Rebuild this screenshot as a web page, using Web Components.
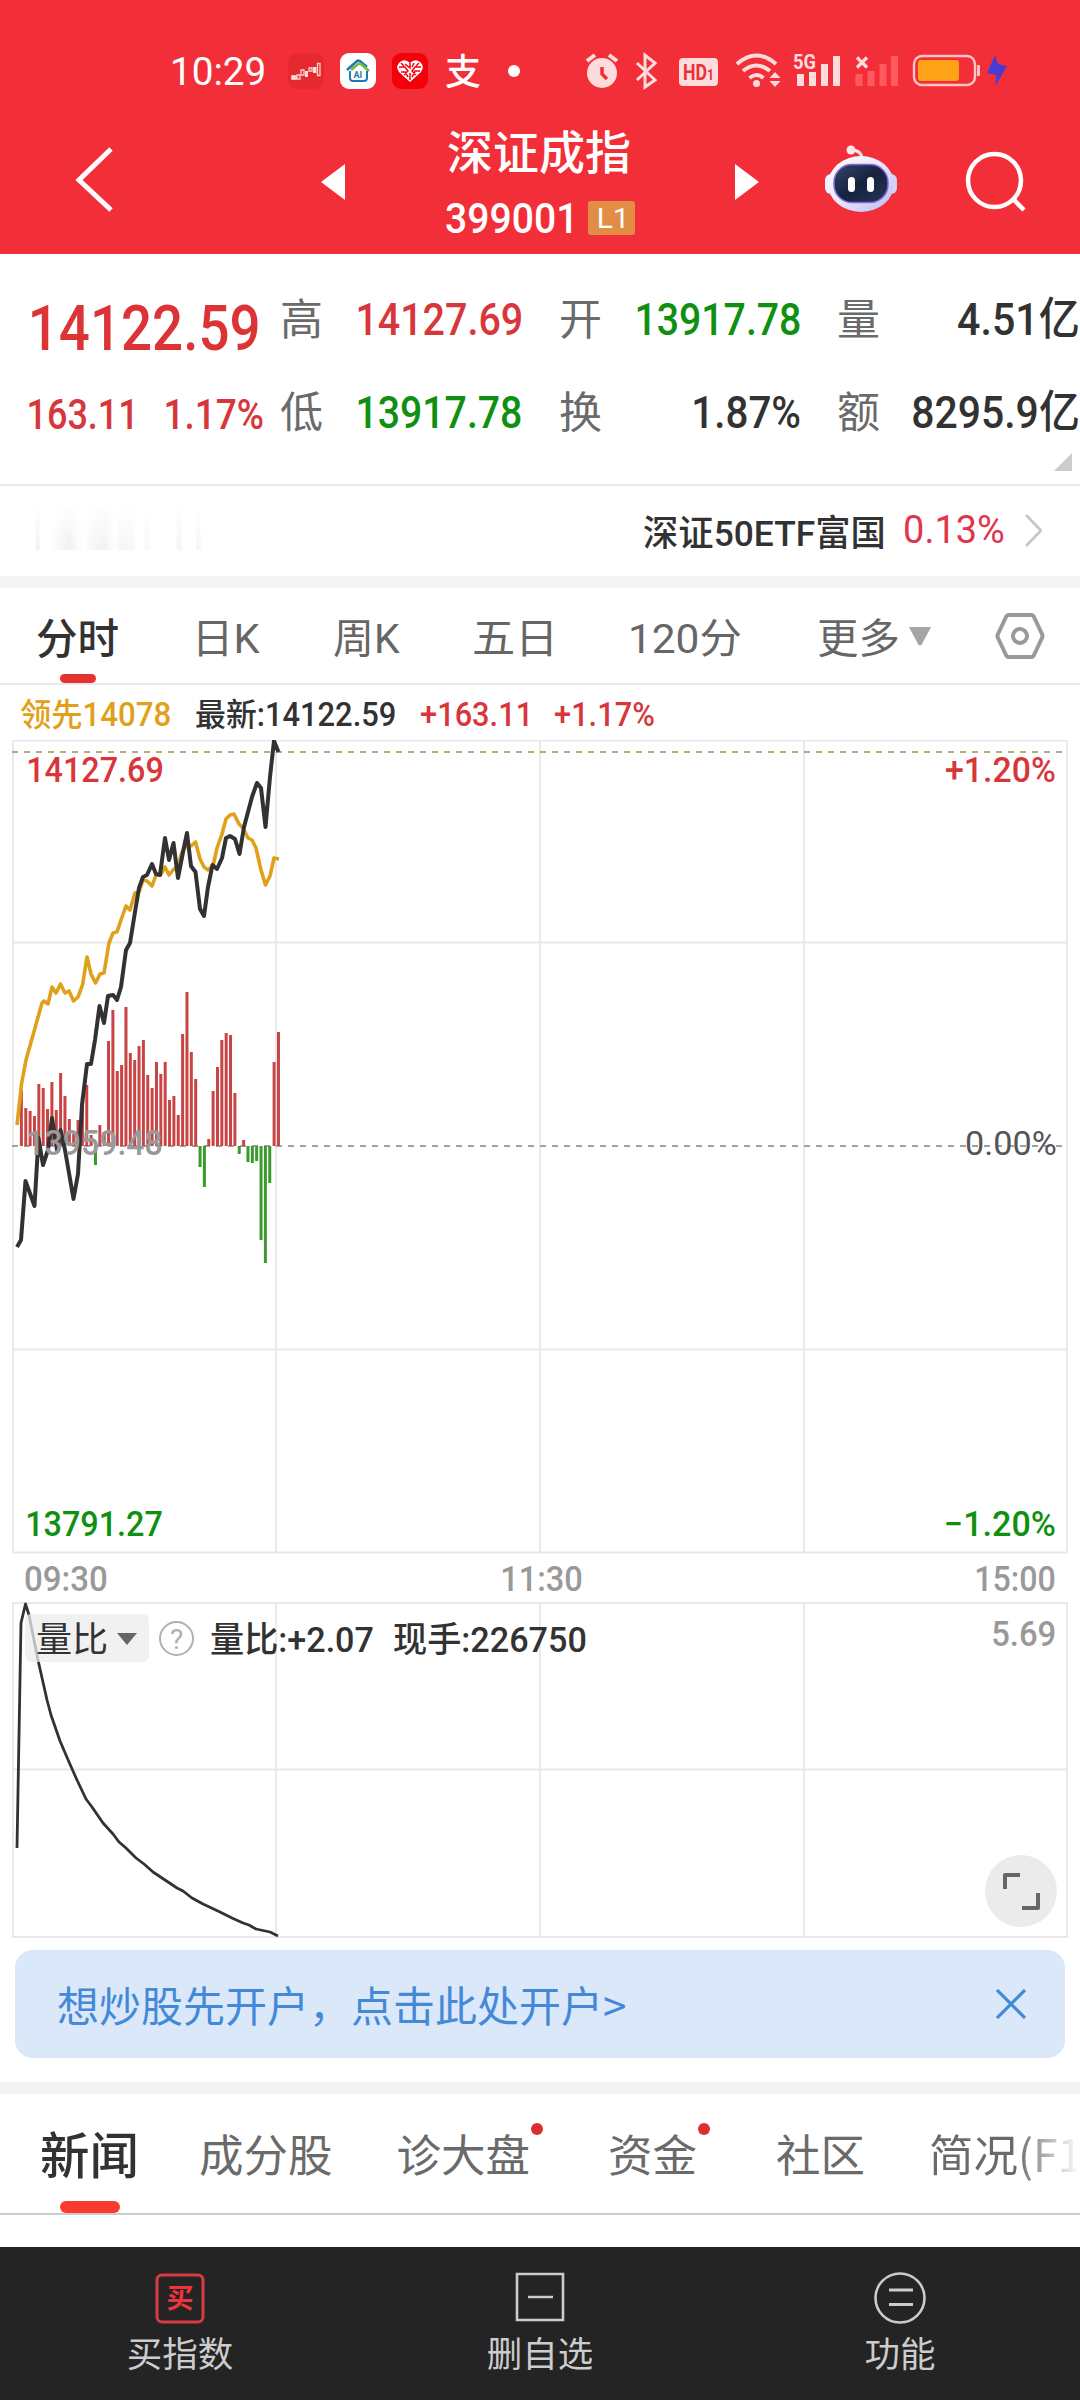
<!DOCTYPE html>
<html lang="zh-CN">
<head>
<meta charset="utf-8">
<title>深证成指</title>
<style>
  body {
    margin: 0;
    width: 1080px;
    height: 2400px;
    overflow: hidden;
    background: #fff;
    color: #323232;
    font-family: Roboto, "Noto Sans CJK SC", sans-serif;
    display: flex;
    flex-direction: column;
  }
</style>
</head>
<body>
<status-bar></status-bar>
<index-header name="深证成指" code="399001"></index-header>
<quote-panel></quote-panel>
<etf-row></etf-row>
<period-tabs></period-tabs>
<trend-chart></trend-chart>
<ratio-chart></ratio-chart>
<open-banner>想炒股先开户，点击此处开户&gt;</open-banner>
<info-tabs></info-tabs>
<bottom-nav></bottom-nav>

<script>
const FONT = 'Roboto, "Noto Sans CJK SC", sans-serif';
const RED = '#d7373b';
const GREEN = '#109010';
const INK = '#323232';
const GRAY = '#999';
const pen = document.createElement('canvas').getContext('2d');

// text squeezed to a width; the box is as high as the digits (cap)
class FitText extends HTMLElement {
  constructor() {
    super();
    this.attachShadow({mode: 'open'});
  }

  connectedCallback() {
    const text = this.getAttribute('text');
    const w = Number(this.getAttribute('w'));
    const cap = Number(this.getAttribute('cap'));
    const weight = this.getAttribute('weight') || 500;
    const size = cap / 0.711;
    pen.font = `${weight} ${size}px ${FONT}`;
    const m = pen.measureText(text);
    const scale = w / (m.actualBoundingBoxRight + m.actualBoundingBoxLeft);
    this.shadowRoot.innerHTML = `
      <style>
        :host { display: block; flex: none; width: ${w}px; height: ${cap}px; }
        svg { display: block; overflow: visible; }
        text { font: ${weight} ${size}px ${FONT}; fill: currentColor; white-space: pre; }
      </style>
      <svg width="${w}" height="${cap}">
        <text transform="scale(${scale} 1)" x="${m.actualBoundingBoxLeft}" y="${cap}">${text}</text>
      </svg>
    `;
  }
}
customElements.define('fit-text', FitText);

function fit(text, w, cap, color, extra = '', weight = 500) {
  return `<fit-text text="${text}" w="${w}" cap="${cap}" weight="${weight}" style="color:${color};${extra}"></fit-text>`;
}

class StatusBar extends HTMLElement {
  constructor() {
    super();
    this.attachShadow({mode: 'open'}).innerHTML = `
      <style>
        :host { display: flex; height: 108px; padding-top: 34px; box-sizing: border-box; background: #f22f38; color: #fff; }
        .left { display: flex; align-items: center; height: 74px; padding-left: 173px; gap: 16px; }
        .left fit-text { margin-right: 8px; }
        .zhi { font: 500 36px/36px "Noto Sans CJK SC"; margin: -4px 0 0 1px; }
        .dot { width: 12px; height: 12px; border-radius: 50%; background: #fff; margin-left: 11px; }
        .right { margin: 8px 0 0 66px; }
        svg { display: block; }
      </style>
      <div class="left">
        ${fit('10:29', 91, 27, '#fff', '', 400)}
        <svg width="36" height="36" viewBox="0 0 36 36">
          <rect width="36" height="36" rx="9" fill="#e62930"/>
          <path d="M4 26v-3h4v3zM9 26v-4h3v4zM13 22v-5h3v5zM21 18h3v-3h-3z" fill="none" stroke="#f8d0cd" stroke-width="1.3"/>
          <path d="M3.500 26.500v-4h4v4zM17 18h3v6h-3zM25 14h3.500v6H25z" fill="#fbe0dd"/>
          <path d="M29.500 10.500h2.500v12h-2.500z" fill="none" stroke="#f8d0cd" stroke-width="1.3"/>
        </svg>
        <svg width="36" height="36" viewBox="0 0 36 36">
          <rect width="36" height="36" rx="9" fill="#fff"/>
          <path d="M7 17L17 8q2-1 4 1l6 5" fill="none" stroke="#1f79b8" stroke-width="2.6"/>
          <path d="M11 17l7-6q2-1 4 1l7 6" fill="none" stroke="#79b943" stroke-width="2.6"/>
          <path d="M10 18v7q0 3 3 3h11q3 0 3-3v-7" fill="none" stroke="#1f79b8" stroke-width="2"/>
          <text x="13.5" y="25" font-size="9" font-weight="700" font-family="Roboto" fill="#1f79b8">AI</text>
        </svg>
        <svg width="36" height="36" viewBox="0 0 36 36">
          <rect width="36" height="36" rx="9" fill="#f40009"/>
          <path d="M18 29L7 19q-4-6 1-10 5-4 10 1 5-5 10-1 5 4 1 10z" fill="#fff"/>
          <path d="M7 14h6l3 4-4 4M18 10v5l-5-4M29 14h-6l-3 4 4 4M18 20v7M13 19l3 5M23 19l-3 5M22 10l-2 4M9 19h5M22 18h6M9 10l3 3M27 10l-3 3" stroke="#f40009" stroke-width="1.5" fill="none"/>
        </svg>
        <span class="zhi">支</span>
        <span class="dot"></span>
      </div>
      <svg class="right" width="430" height="56" viewBox="586 42 430 56" fill="#ffdcdc">
        <circle cx="602" cy="73" r="15"/>
        <path d="M587 61l8-6M617 61l-8-6" stroke="#ffdcdc" stroke-width="4"/>
        <path d="M602 67v7l5 5" stroke="#f22f38" stroke-width="3.5" fill="none"/>
        <path d="M637 63l18 17-10 7V55l10 8-18 17" fill="none" stroke="#ffdcdc" stroke-width="3"/>
        <rect x="679" y="58" width="39" height="28" rx="4"/>
        <text x="683" y="80" font-size="22" font-weight="700" font-family="Roboto" fill="#e8323a" textLength="31" lengthAdjust="spacingAndGlyphs">HD<tspan font-size="15">1</tspan></text>
        <g fill="none" stroke="#ffdcdc" stroke-width="4">
          <path d="M737 64q19-17 39 0M743 71q13-11 27 0M749.500 78q7-6 14 0"/>
        </g>
        <circle cx="756.500" cy="83.500" r="3.500"/>
        <path d="M769.500 78l5.500-6 5.500 6zM769.500 81l5.500 6 5.500-6z"/>
        <text x="793" y="69" font-size="21" font-weight="700" font-family="Roboto" textLength="23" lengthAdjust="spacingAndGlyphs">5G</text>
        <path d="M797 74h7v12h-7zM809 72h7v14h-7zM821 64h7v22h-7zM833 56h7v30h-7z"/>
        <path d="M857 57.500l10 10M867 57.500l-10 10" stroke="#ffdcdc" stroke-width="3.2"/>
        <path d="M855.500 74h7v12h-7zM867.500 71h7v15h-7zM879.500 64h7v22h-7zM891 56h7v30h-7z" fill="#ff5a5f"/>
        <rect x="914" y="56" width="61" height="29" rx="8" fill="none" stroke="#ffc4c4" stroke-width="2.400"/>
        <rect x="918" y="60" width="41" height="21" rx="3" fill="#ffa218"/>
        <rect x="977" y="65" width="3" height="11" rx="1" fill="#ffc4c4"/>
        <path d="M995 55l-8 18 9 2-.5 11 11.500-20-9-2z" fill="#4c3bd0"/>
      </svg>
    `;
  }
}
customElements.define('status-bar', StatusBar);

class IndexHeader extends HTMLElement {
  constructor() {
    super();
    this.attachShadow({mode: 'open'});
  }

  connectedCallback() {
    this.shadowRoot.innerHTML = `
      <style>
        :host { display: flex; height: 146px; background: #f22f38; color: #fff; }
        svg { display: block; flex: none; }
        .title { width: 190px; display: flex; flex-direction: column; padding-top: 17px; }
        h1 { margin: 0 0 0 2px; font: 500 46px/48px "Noto Sans CJK SC"; white-space: nowrap; }
        .code { display: flex; align-items: center; gap: 17px; height: 34px; margin: 28px 0 0 1px; }
        .level { width: 48px; height: 34px; border-radius: 3px; background: #e28d46; display: flex; align-items: center; justify-content: center; }
      </style>
      <svg width="445" height="146" viewBox="0 108 445 146">
        <path d="M111 149L79 180l32 30" fill="none" stroke="#fff" stroke-width="5"/>
        <path d="M321 182l24-18v36z" fill="#fff"/>
      </svg>
      <div class="title">
        <h1>${this.getAttribute('name')}</h1>
        <div class="code">
          ${fit(this.getAttribute('code'), 125, 30, '#fff')}
          <span class="level">${fit('L1', 25, 19, '#fff', '', 400)}</span>
        </div>
      </div>
      <svg width="445" height="146" viewBox="635 108 445 146">
        <defs>
          <linearGradient id="shell" x1="0" y1="0" x2="1" y2="1">
            <stop offset="0" stop-color="#fff"/><stop offset=".5" stop-color="#e9e6fb"/><stop offset="1" stop-color="#b5b8f5"/>
          </linearGradient>
          <linearGradient id="face" x1="0" y1="0" x2="1" y2="1">
            <stop offset="0" stop-color="#36466a"/><stop offset=".5" stop-color="#16233f"/><stop offset="1" stop-color="#263354"/>
          </linearGradient>
        </defs>
        <path d="M735 164l24 18-24 18z" fill="#fff"/>
        <path d="M851 150q10 0 11 8" fill="none" stroke="#fbe4ea" stroke-width="3"/>
        <circle cx="851" cy="150" r="4.500" fill="#fbe4ea"/>
        <rect x="825" y="174" width="15" height="20" rx="6" fill="#f1effc"/>
        <rect x="882" y="174" width="15" height="20" rx="6" fill="#d3d3fa"/>
        <ellipse cx="861" cy="184" rx="33" ry="28" fill="url(#shell)"/>
        <rect x="834" y="164.500" width="54" height="38" rx="18" fill="url(#face)" stroke="#8068d8" stroke-width="1.500"/>
        <rect x="848" y="177" width="7" height="15" rx="3.500" fill="#fff"/>
        <rect x="867" y="177" width="7" height="15" rx="3.500" fill="#fff"/>
        <circle cx="994.500" cy="180.500" r="26.500" fill="none" stroke="#fff" stroke-width="4.500"/>
        <path d="M1013 199l11 11" stroke="#fff" stroke-width="4.500"/>
      </svg>
    `;
  }
}
customElements.define('index-header', IndexHeader);

class QuotePanel extends HTMLElement {
  constructor() {
    super();
    this.attachShadow({mode: 'open'}).innerHTML = `
      <style>
        :host { display: flex; height: 232px; box-sizing: border-box; border-bottom: 2px solid #e9e9e9; position: relative; }
        .last { width: 280px; box-sizing: border-box; padding: 51px 0 0 28px; }
        .change { display: flex; gap: 34px; margin: 49px 0 0 1px; }
        .grid { display: grid; grid-template-columns: 42px 199px 81px 198px 80px 198px; grid-template-rows: 43px 43px; row-gap: 50px; padding-top: 43px; align-items: center; }
        .grid fit-text { justify-self: end; }
        .k { font: 400 43px/43px "Noto Sans CJK SC"; color: #6a6a6a; width: 43px; margin-top: -4px; justify-self: end; }
        .row { display: contents; }
        .row .k:first-child { justify-self: start; }
        .corner { position: absolute; right: 8px; bottom: 13px; border: 9px solid; border-color: transparent #ccc #ccc transparent; }
      </style>
      <div class="last">
        ${fit('14122.59', 226, 45, '#dc3336', 'margin-left:4px')}
        <div class="change">${fit('163.11', 103, 30, RED)}${fit('1.17%', 97, 30, RED)}</div>
      </div>
      <div class="grid">
        <div class="row"><span class="k">高</span>${fit('14127.69', 163, 32, RED)}<span class="k">开</span>${fit('13917.78', 163, 32, GREEN)}<span class="k">量</span>${fit('4.51亿', 120, 32, INK)}</div>
        <div class="row"><span class="k">低</span>${fit('13917.78', 163, 32, GREEN)}<span class="k">换</span>${fit('1.87%', 106, 32, INK)}<span class="k">额</span>${fit('8295.9亿', 165, 32, INK)}</div>
      </div>
      <span class="corner"></span>
    `;
  }
}
customElements.define('quote-panel', QuotePanel);

class EtfRow extends HTMLElement {
  constructor() {
    super();
    this.attachShadow({mode: 'open'}).innerHTML = `
      <style>
        :host { display: flex; height: 102px; box-sizing: border-box; border-bottom: 12px solid #f4f4f4; padding: 0 38px 0 25px; }
        .ghost { width: 180px; height: 46px; margin: 18px auto 0 0;
          background: linear-gradient(90deg, #fff 9px, #efefef 13px, #fff 16px 27px, #f6f6f6 36px, #f0f0f0 45px, #fbfbfb 52px, #fff 60px, #f5f5f5 68px, #f1f1f1 80px, #fff 90px, #f6f6f6 96px, #f7f7f7 108px, #fff 111px 118px, #f7f7f7 122px, #fff 126px 150px, #f2f2f2 154px, #fff 158px 170px, #f3f3f3 173px, #fff 177px);
          -webkit-mask: linear-gradient(transparent, #000); mask: linear-gradient(transparent, #000); }
        svg { margin: 28px 0 0 21px; }
      </style>
      <span class="ghost"></span>
      ${fit('深证50ETF富国', 239, 25.5, INK, 'margin-top:34px')}
      ${fit('0.13%', 99, 28, '#e0364c', 'margin:29px 0 0 22px', 400)}
      <svg width="17" height="33" viewBox="0 0 17 33"><path d="M1 1l15 15.500L1 32" fill="none" stroke="#c8c8c8" stroke-width="3"/></svg>
    `;
  }
}
customElements.define('etf-row', EtfRow);

class PeriodTabs extends HTMLElement {
  constructor() {
    super();
    this.attachShadow({mode: 'open'}).innerHTML = `
      <style>
        :host { display: flex; height: 97px; box-sizing: border-box; border-bottom: 2px solid #e9e9e9; padding-left: 37px; color: #666; }
        .tab { height: 95px; box-sizing: border-box; padding-top: 36px; }
        .on { display: flex; flex-direction: column; align-items: center; color: #323232; }
        .on i { margin-top: auto; width: 36px; height: 9px; border-radius: 5px; background: #e5322e; }
        svg { flex: none; }
      </style>
      <div class="tab on">${fit('分时', 81, 30, INK)}<i></i></div>
      <div class="tab" style="margin-left:81px">${fit('日K', 61, 29, '#666', '', 400)}</div>
      <div class="tab" style="margin-left:74px">${fit('周K', 66, 29, '#666', '', 400)}</div>
      <div class="tab" style="margin-left:74px">${fit('五日', 77, 29, '#666', '', 400)}</div>
      <div class="tab" style="margin-left:80px">${fit('120分', 110, 29, '#666', '', 400)}</div>
      <div class="tab" style="margin-left:77px">${fit('更多', 80, 29, '#666', '', 400)}</div>
      <svg width="150" height="95" viewBox="898 588 150 95">
        <path d="M909 627h22l-9 17q-2 3-4 0z" fill="#a5a5a5"/>
        <path d="M1009 615h22q2 0 3 2l8 17q1 2 0 4l-8 17q-1 2-3 2h-22q-2 0-3-2l-8-17q-1-2 0-4l8-17q1-2 3-2z" fill="none" stroke="#999" stroke-width="4"/>
        <circle cx="1020" cy="636" r="7" fill="none" stroke="#999" stroke-width="4"/>
      </svg>
    `;
  }
}
customElements.define('period-tabs', PeriodTabs);

const price = '17,1247 21,1240 25.500,1181 34.500,1206 38.500,1138 43,1165 48,1150 52,1118 57,1150 60.500,1130 65,1150 73.500,1199 78,1174 82,1105 87,1064 91,1064 95,1040 99.500,1006 104,1023 108,996 113,995 117,1000 121,987 126,950 130,943 135,912 139,888 143,877 147,875 152,864 156,874 160,875 165,838 169,860 173.500,843 178,878 183,852 187,833 191,866 195.500,872 200,909 204,916 208,887 212.500,865 217,869 222,858 226,838 230,836 235,839 239.500,854 244,827 252,797 257,783 261,788 265.500,827 270,777 274,741 278.500,752';
const lead = '17,1125 21.500,1084 26,1060 35,1028 42,1003 44,1001 48,1004 52,987 56,993 60.500,984 65,993 69,991 73.500,1001 78,997 82.500,985 87,957 91,974 95.500,983 100,974 104,973 109,943 113,933 117,932 121,920 126,906 130,910 135,893 139,892 143,880 147,881 152,886 156,875 161,874 165,867 169,875 173,870 178,866 182,852 187,845 191,846 195.500,842 200,859 204,867 208,870 213,866 217,848 222,834 226,819 230,815 234,814 239,824 243,828 248,838 252,840 256,848 261,870 265.500,885 270,876 274,858 279,859';
// minute bars, + above and - below the zero line
const force = [56, 38, 35, 30, 62, 58, 37, 64, 36, 73, 50, 27, 12, 26, 50, 61, 11, -19, 21, 14, 105, 136, 75, 81, 139, 93, 86, 100, 106, 71, 58, 84, 72, 84, 46, 50, 31, 112, 154, 94, 67, -21, -41, 7, 55, 79, 106, 113, 111, 53, -8, 6, -16, -17, -15, -94, -117, -37, 84, 114];

class TrendChart extends HTMLElement {
  constructor() {
    super();
    const bars = force.map((v, i) => {
      const x = 19.900 + i * 4.357;
      return `<rect x="${x.toFixed(2)}" y="${v > 0 ? 1146 - v : 1146}" width="3" height="${Math.abs(v)}" fill="${v > 0 ? '#c94545' : '#3b9a2c'}"/>`;
    }).join('');
    this.attachShadow({mode: 'open'}).innerHTML = `
      <style>
        :host { display: block; height: 917px; }
        .legend { display: flex; height: 55px; padding: 18px 0 0 20px; box-sizing: border-box; }
        .plot { position: relative; height: 814px; }
        svg { display: block; }
        .plot fit-text { position: absolute; }
        .times { display: flex; justify-content: space-between; padding: 12px 25px 0; }
      </style>
      <div class="legend">
        ${fit('领先14078', 150, 23, '#dfa01b')}
        ${fit('最新:14122.59', 199, 23, INK, 'margin-left:26px')}
        ${fit('+163.11', 107, 23, RED, 'margin-left:26px')}
        ${fit('+1.17%', 99, 23, RED, 'margin-left:27px')}
      </div>
      <div class="plot">
        <svg width="1080" height="814" viewBox="0 740 1080 814">
          <path d="M13 740.500h1054v812H13zM276 741v812M540 741v812M804 741v812M13 942.500h1054M13 1349.500h1054" fill="none" stroke="#e8e8e8" stroke-width="1.800"/>
          <path d="M12 752h1054" stroke="#b5ad72" stroke-width="1.800" stroke-dasharray="6 6"/>
          <path d="M12 1146h1054" stroke="#a0a0a0" stroke-width="1.800" stroke-dasharray="6 6"/>
          ${bars}
          <g fill="none" stroke-width="3.600" stroke-linejoin="round">
            <polyline points="${lead}" stroke="#dfa01b"/>
            <polyline points="${price}" stroke="#323232" stroke-width="4"/>
          </g>
        </svg>
        ${fit('14127.69', 134, 25, RED, 'left:28px;top:17px')}
        ${fit('+1.20%', 109, 25, RED, 'left:946px;top:17px')}
        ${fit('13959.48', 134, 25, GRAY, 'left:28px;top:390px')}
        ${fit('0.00%', 90, 24, '#555', 'left:966px;top:391px', 400)}
        ${fit('13791.27', 135, 25, GREEN, 'left:27px;top:771px')}
        ${fit('−1.20%', 109, 25, GREEN, 'left:946px;top:771px')}
      </div>
      <div class="times">${fit('09:30', 82, 25, GRAY)}${fit('11:30', 80, 25, GRAY)}${fit('15:00', 79, 25, GRAY)}</div>
    `;
  }
}
customElements.define('trend-chart', TrendChart);

class RatioChart extends HTMLElement {
  constructor() {
    super();
    this.attachShadow({mode: 'open'}).innerHTML = `
      <style>
        :host { display: block; height: 347px; position: relative; }
        svg { display: block; }
        .bar { position: absolute; left: 25px; right: 25px; top: 12px; height: 48px; display: flex; align-items: flex-start; }
        .pick { display: flex; width: 124px; height: 48px; box-sizing: border-box; padding: 13px 0 0 12px; border-radius: 6px; background: rgba(236,236,236,.75); }
        .pick i { margin: 6px 0 0 10px; border: 10px solid transparent; border-width: 12px 10px 0; border-top-color: #666; }
        .help { width: 31px; height: 31px; margin: 7px 17px 0 10px; border: 2px solid #b0b0b0; border-radius: 50%; display: flex; align-items: center; justify-content: center; }
        .full { position: absolute; left: 985px; top: 253px; }
      </style>
      <svg width="1080" height="340" viewBox="0 1602 1080 340">
        <path d="M13 1603h1054v334H13zM276 1603v334M540 1603v334M804 1603v334M13 1769.500h1054" fill="none" stroke="#e8e8e8" stroke-width="1.800"/>
        <polyline points="17,1848 21,1623 25.500,1604 29,1615 38,1660 47,1700 51,1715 60,1741 69,1762 77,1780 86,1799 92,1807 103,1823 113,1834 119,1842 126,1848 136,1858 144,1864 153,1872 165,1880 177,1888 183,1891 192,1898 203,1904 220,1912 232,1918 243,1923 249,1925 256,1929 270,1932 278,1936" fill="none" stroke="#323232" stroke-width="2.800" stroke-linejoin="round"/>
      </svg>
      <div class="bar">
        <div class="pick">${fit('量比', 70, 25, INK, '', 400)}<i></i></div>
        <span class="help">${fit('?', 12, 20, '#b0b0b0', '', 400)}</span>
        ${fit('量比:+2.07', 162, 25, INK, 'margin-top:13px')}
        ${fit('现手:226750', 192, 25, INK, 'margin:13px auto 0 21px')}
        ${fit('5.69', 62, 25.500, GRAY, 'margin-top:6px')}
      </div>
      <svg class="full" width="72" height="72" viewBox="0 0 72 72">
        <circle cx="36" cy="36" r="36" fill="#ebebeb"/>
        <path d="M20 34V20h15M37 53h16V38" fill="none" stroke="#666" stroke-width="4" stroke-linejoin="round"/>
      </svg>
    `;
  }
}
customElements.define('ratio-chart', RatioChart);

class OpenBanner extends HTMLElement {
  constructor() {
    super();
    this.attachShadow({mode: 'open'}).innerHTML = `
      <style>
        :host { display: flex; align-items: center; justify-content: space-between; height: 108px; margin: 1px 15px 24px; padding: 0 39px 0 42px; box-sizing: border-box;
          border-radius: 18px; background: #dae8fa; color: #4489d8; font: 400 42px/60px "Noto Sans CJK SC"; }
      </style>
      <span><slot></slot></span>
      <svg width="30" height="30" viewBox="0 0 30 30"><path d="M1 1l28 28M29 1L1 29" stroke="#4489d8" stroke-width="3.200"/></svg>
    `;
  }
}
customElements.define('open-banner', OpenBanner);

class InfoTabs extends HTMLElement {
  constructor() {
    super();
    this.attachShadow({mode: 'open'}).innerHTML = `
      <style>
        :host { display: flex; height: 133px; box-sizing: border-box; border-top: 12px solid #f4f4f4; border-bottom: 2px solid #ccc; padding-left: 40px;
          overflow: hidden; font: 400 44.500px/60px "Noto Sans CJK SC"; color: #6a6a6a; white-space: nowrap; }
        span { flex: none; position: relative; margin: 29px 0 0 64px; height: 60px; }
        .on { margin: 0; padding-top: 29px; height: 119px; box-sizing: border-box; display: flex; flex-direction: column; align-items: center; font-weight: 500; font-size: 49.500px; color: #323232; }
        .on i { margin-top: auto; width: 60px; height: 12px; border-radius: 6px; background: #fb3b30; }
        .new::after { content: ""; position: absolute; right: -13px; top: 0; width: 12px; height: 12px; border-radius: 50%; background: #dc3030; }
        .fade { background: linear-gradient(90deg, #6a6a6a 45%, #fff 78%); -webkit-background-clip: text; background-clip: text; color: transparent; }
      </style>
      <span class="on">新闻<i></i></span>
      <span style="margin-left:60px">成分股</span>
      <span class="new">诊大盘</span>
      <span class="new" style="margin-left:78px">资金</span>
      <span style="margin-left:79px">社区</span>
      <span class="fade">简况(F10)</span>
    `;
  }
}
customElements.define('info-tabs', InfoTabs);

class BottomNav extends HTMLElement {
  constructor() {
    super();
    this.attachShadow({mode: 'open'}).innerHTML = `
      <style>
        :host { display: grid; grid-template-columns: repeat(3, 1fr); flex: none; height: 153px; margin-top: 32px; background: #242424; color: #ccc; font: 400 35.500px/50px "Noto Sans CJK SC"; }
        div { display: flex; flex-direction: column; align-items: center; padding-top: 25px; }
        svg { display: block; margin-bottom: 3px; }
      </style>
      <div>
        <svg width="52" height="52" viewBox="0 0 52 52">
          <rect x="3" y="3" width="46" height="47" rx="5" fill="none" stroke="#d63d42" stroke-width="3"/>
          <text x="26" y="36" text-anchor="middle" font-size="27" font-weight="700" font-family="Noto Sans CJK SC" fill="#f0343c">买</text>
        </svg>
        买指数
      </div>
      <div>
        <svg width="52" height="52" viewBox="0 0 52 52"><path d="M3 2h46v46H3zM14 25h25" fill="none" stroke="#ccc" stroke-width="2.600"/></svg>
        删自选
      </div>
      <div>
        <svg width="52" height="52" viewBox="0 0 52 52">
          <circle cx="26" cy="26" r="24.500" fill="none" stroke="#ccc" stroke-width="2.600"/>
          <path d="M15 18h24M15 32.500h24" stroke="#ccc" stroke-width="3"/>
        </svg>
        功能
      </div>
    `;
  }
}
customElements.define('bottom-nav', BottomNav);
</script>
</body>
</html>
